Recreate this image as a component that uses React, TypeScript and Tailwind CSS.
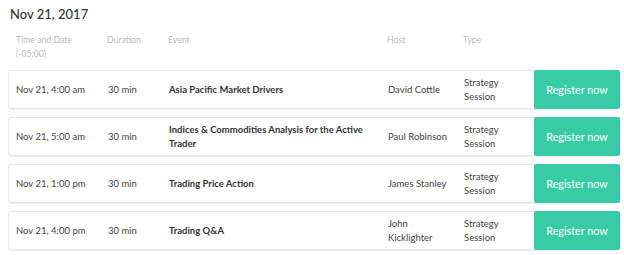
const events = [
  { time: "Nov 21, 4:00 am", duration: "30 min", title: "Asia Pacific Market Drivers", host: "David Cottle" },
  { time: "Nov 21, 5:00 am", duration: "30 min", title: "Indices & Commodities Analysis for the Active Trader", host: "Paul Robinson" },
  { time: "Nov 21, 1:00 pm", duration: "30 min", title: "Trading Price Action", host: "James Stanley" },
  { time: "Nov 21, 4:00 pm", duration: "30 min", title: "Trading Q&A", host: "John Kicklighter" },
];

const cols = "grid grid-cols-[99px_61px_219px_76px_70px_85px]";

const App = () => {
  return (
    <div className="w-[624px] h-[255px] bg-white font-['Lato','Liberation_Sans',sans-serif] text-[#444] overflow-hidden">
      <div className="px-[8px] pt-[4px]">
        <h2 className="text-[13px] leading-[20px] font-medium text-[#333] pl-[2px]">Nov 21, 2017</h2>

        {/* header row */}
        <div className={`${cols} mt-[9px] text-[8.7px] leading-[14px] text-[#bbb]`}>
          <div className="pl-[8px]">
            Time and Date
            <br />
            (-05:00)
          </div>
          <div>Duration</div>
          <div>Event</div>
          <div>Host</div>
          <div>Type</div>
          <div></div>
        </div>

        {/* rows */}
        <div className="mt-[9px] flex flex-col gap-[8px]">
          {events.map((ev) => (
            <div
              key={ev.title}
              className={`${cols} h-[39px] items-center border border-[#e8e8e8] rounded-[3px] shadow-[0_1px_0_#efefef] text-[9.5px] leading-[14px]`}
            >
              <div className="pl-[7px]">{ev.time}</div>
              <div>{ev.duration}</div>
              <div className="font-bold text-[#333] pr-[10px]">{ev.title}</div>
              <div className="pr-[12px]">{ev.host}</div>
              <div className="pr-[6px]">Strategy Session</div>
              <button className="-my-px -mr-px h-[39px] rounded-[2px] bg-[#37cca5] text-white text-[10.8px]">
                Register now
              </button>
            </div>
          ))}
        </div>
      </div>
    </div>
  );
};

export default App;
